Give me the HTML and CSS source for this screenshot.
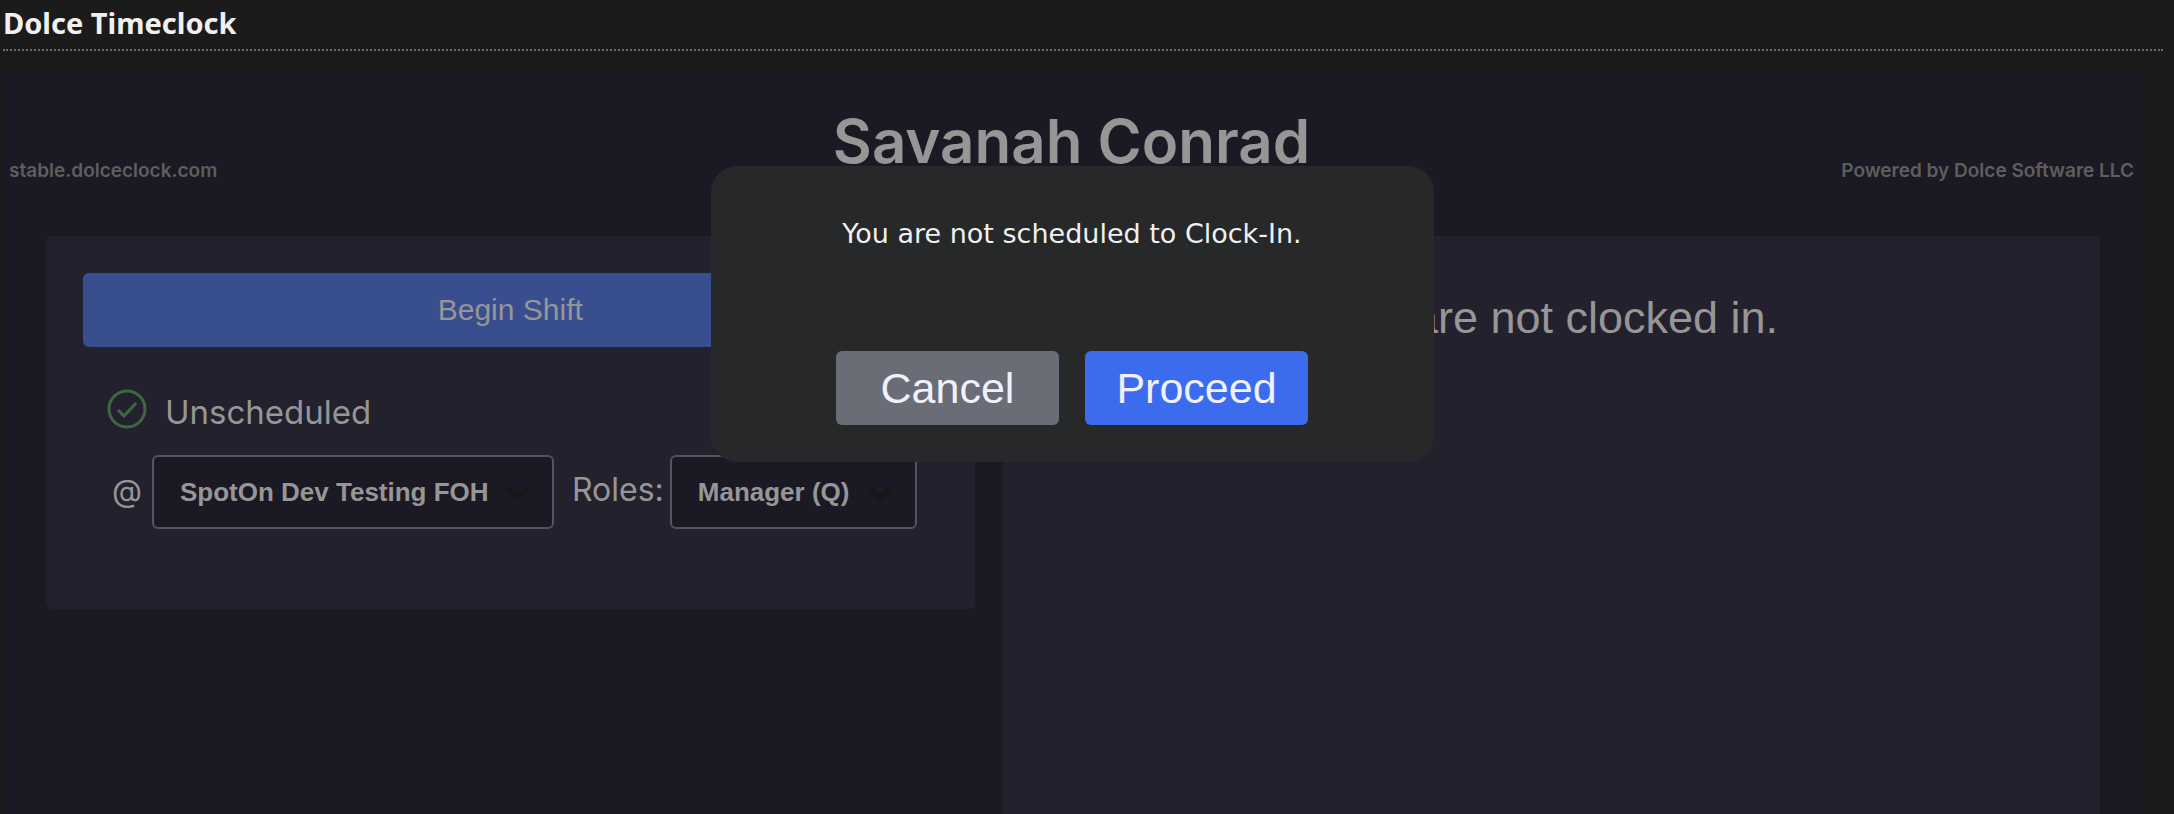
FILE: index.html
```html
<!DOCTYPE html>
<html lang="en">
<head>
    <meta charset="UTF-8">
    <meta name="viewport" content="width=device-width, initial-scale=1.0">
    <link rel="stylesheet" href="styles.css">
    <title>Dolce Timeclock</title>
</head>
<body>

    <h1 class="page-title">Dolce Timeclock</h1>

    <main class="clock">
        <header class="clock-header">
            <span class="note">stable.dolceclock.com</span>
            <h2 class="employee">Savanah Conrad</h2>
            <span class="note note-right">Powered by Dolce Software LLC</span>
        </header>

        <div class="panels">
            <section class="panel panel-shift">
                <button class="begin" type="button">Begin Shift</button>

                <div class="status">
                    <svg class="check" viewBox="0 0 40 40" aria-hidden="true">
                        <circle cx="20" cy="20" r="18"/>
                        <path d="M11 21l6 6 12-13"/>
                    </svg>
                    <span>Unscheduled</span>
                </div>

                <div class="fields">
                    <label class="at" for="location">@</label>
                    <div class="picker picker-location">
                        <select id="location">
                            <option>SpotOn Dev Testing FOH</option>
                        </select>
                        <svg class="arrow" viewBox="0 0 26 18" aria-hidden="true"><path d="M3 3l10 10L23 3"/></svg>
                    </div>
                    <label class="roles" for="role">Roles:</label>
                    <div class="picker picker-role">
                        <select id="role">
                            <option>Manager (Q)</option>
                        </select>
                        <svg class="arrow" viewBox="0 0 26 18" aria-hidden="true"><path d="M3 3l10 10L23 3"/></svg>
                    </div>
                </div>
            </section>

            <section class="panel panel-message">
                <p>You are not clocked in.</p>
            </section>
        </div>

        <!-- Confirmation shown over the clock -->
        <div class="overlay">
            <div class="dialog" role="dialog" aria-modal="true" aria-labelledby="dialog-text">
                <p id="dialog-text">You are not scheduled to Clock-In.</p>
                <div class="dialog-buttons">
                    <button class="cancel" type="button">Cancel</button>
                    <button class="proceed" type="button">Proceed</button>
                </div>
            </div>
        </div>
    </main>

</body>
</html>
```
FILE: styles.css
```css
* {
    box-sizing: border-box;
}

body {
    display: flex;
    flex-direction: column;
    min-height: 100vh;
    margin: 0;
    background-color: #1b1b1b;
    color: #969696;
    font-family: "Liberation Sans", Arial, sans-serif;
}

h1, h2, p {
    margin: 0;
}

button, select {
    font-family: inherit;
    border: none;
    border-radius: 6px;
    cursor: pointer;
}

.page-title {
    margin: 0 11px 22px 3px;
    padding: 4px 0 7px 0;
    border-bottom: 2px dotted #6b6b6b;
    color: #f0f0f0;
    font-family: "Noto Sans", sans-serif;
    font-size: 29px;
    line-height: 38px;
}

/* Clock area */
.clock {
    position: relative;
    flex: 1;
    display: flex;
    flex-direction: column;
    margin: 0 33px 0 3px;
    background-color: #1b1923;
}

.clock-header {
    display: grid;
    grid-template-columns: 1fr auto 1fr;
    align-items: end;
    height: 163px;
    padding: 0 7px 53px 6px;
}

.employee {
    font-family: Inter, sans-serif;
    font-size: 60px;
    font-weight: 600;
    line-height: 84px;
}

.note {
    color: #5e5e5e;
    font-family: Inter, sans-serif;
    font-size: 19px;
    font-weight: 600;
    line-height: 24px;
}

.note-right {
    text-align: right;
}

.panels {
    flex: 1;
    display: grid;
    grid-template-columns: 11fr 13fr;
    gap: 28px;
    padding: 0 41px 0 43px;
}

.panel {
    background-color: #23212d;
    border-radius: 6px;
}

.panel-shift {
    align-self: start;
    padding: 37px 37px 80px 37px;
}

.panel-message {
    border-radius: 6px 6px 0 0;
    padding-top: 56px;
    font-size: 45px;
    line-height: 52px;
    text-align: center;
}

.begin {
    display: block;
    width: 100%;
    height: 74px;
    background-color: #384e8f;
    color: #969696;
    font-size: 30px;
}

.status {
    display: flex;
    align-items: flex-start;
    gap: 18px;
    height: 46px;
    margin: 42px 0 20px 24px;
    font-family: Inter, sans-serif;
    font-size: 33px;
    line-height: 46px;
}

.check {
    width: 40px;
    height: 40px;
    fill: none;
    stroke: #3f6840;
    stroke-width: 3;
}

.fields {
    display: flex;
    align-items: center;
    font-family: Inter, sans-serif;
}

.at {
    margin: 0 10px 4px 29px;
    font-size: 31px;
}

.roles {
    margin: 0 6px 6px 18px;
    font-size: 32px;
}

.picker {
    position: relative;
}

.picker select {
    appearance: none;
    width: 100%;
    height: 74px;
    padding: 0 26px;
    border: 2px solid #525461;
    background-color: #1b1923;
    color: #969696;
    font-family: "Liberation Sans", Arial, sans-serif;
    font-size: 26px;
    font-weight: bold;
}

.picker-location {
    width: 402px;
}

.picker-role {
    width: 247px;
}

.arrow {
    position: absolute;
    top: 30px;
    right: 24px;
    width: 26px;
    height: 18px;
    fill: none;
    stroke: #171816;
    stroke-width: 5;
    pointer-events: none;
}

/* Dialog */
.overlay {
    position: absolute;
    inset: 0;
    display: flex;
    justify-content: center;
    align-items: flex-start;
    padding-top: 93px;
}

.dialog {
    width: 723px;
    padding: 48px 37px 37px 37px;
    border-radius: 26px;
    background-color: #262829;
    color: #f0f0f0;
    text-align: center;
}

.dialog p {
    margin-bottom: 97px;
    font-family: "DejaVu Sans", Verdana, sans-serif;
    font-size: 27px;
    line-height: 40px;
}

.dialog-buttons {
    display: flex;
    justify-content: center;
    gap: 26px;
}

.dialog button {
    width: 223px;
    height: 74px;
    color: #f0f0ff;
    font-size: 43px;
}

.dialog .cancel {
    background-color: #6b6d76;
}

.dialog .proceed {
    background-color: #3c6cee;
}
```
